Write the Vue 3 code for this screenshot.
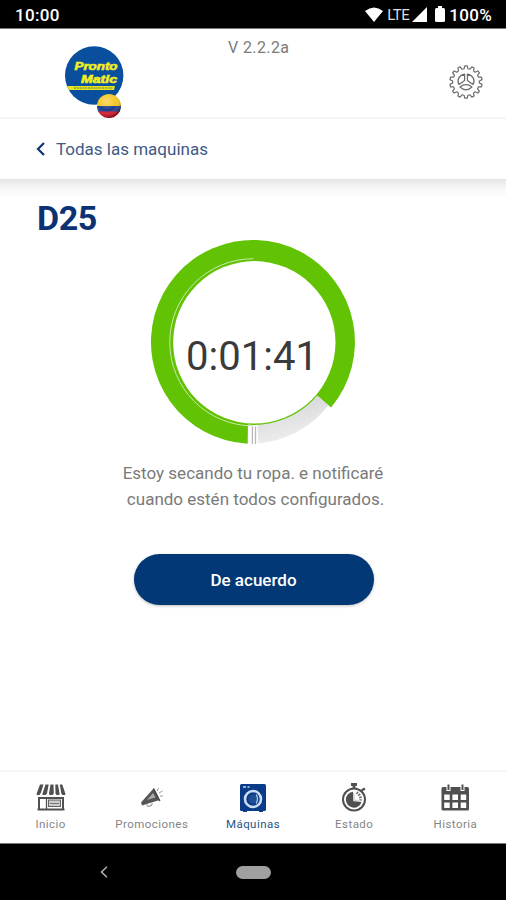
<script setup>
import { ref, computed } from 'vue'

const active = ref('maquinas')
const seconds = ref(101)

const tabs = [
  { id: 'inicio', label: 'Inicio' },
  { id: 'promociones', label: 'Promociones' },
  { id: 'maquinas', label: 'Máquinas' },
  { id: 'estado', label: 'Estado' },
  { id: 'historia', label: 'Historia' }
]

const time = computed(() => {
  const h = Math.floor(seconds.value / 3600)
  const m = Math.floor(seconds.value / 60) % 60
  const s = seconds.value % 60
  return `${h}:${String(m).padStart(2, '0')}:${String(s).padStart(2, '0')}`
})

// settings gear outline
const gear = computed(() => {
  const teeth = 14
  const step = (Math.PI * 2) / teeth
  const points = []
  for (let i = 0; i < teeth; i++) {
    const a = i * step - Math.PI / 2
    for (const [k, r] of [[-0.32, 13.4], [-0.17, 16.2], [0.17, 16.2], [0.32, 13.4]]) {
      points.push(`${(18 + r * Math.cos(a + k * step)).toFixed(2)},${(18 + r * Math.sin(a + k * step)).toFixed(2)}`)
    }
  }
  return points.join(' ')
})
</script>

<template>
  <div class="phone">
    <div class="status">
      <span class="clock">10:00</span>
      <div class="status-right">
        <svg class="wifi" width="18" height="15" viewBox="0 0 18 15">
          <path d="M0 4Q9-3 18 4L9 15Z" fill="#fff" />
        </svg>
        <span class="lte">LTE</span>
        <svg class="signal" width="15" height="15" viewBox="0 0 15 15">
          <path d="M15 0V15H0Z" fill="#fff" />
        </svg>
        <svg class="battery" width="10" height="16" viewBox="0 0 10 16">
          <path d="M3 0H7V2H8.500Q10 2 10 3.500V14.500Q10 16 8.500 16H1.500Q0 16 0 14.500V3.500Q0 2 1.500 2H3Z" fill="#fff" />
        </svg>
        <span class="percent">100%</span>
      </div>
    </div>

    <header class="header">
      <svg class="logo" width="62" height="76" viewBox="0 0 62 76">
        <defs>
          <radialGradient id="shine" cx="0.4" cy="0.3" r="0.7">
            <stop offset="0" stop-color="#fff" stop-opacity="0.35" />
            <stop offset="0.55" stop-color="#fff" stop-opacity="0" />
            <stop offset="1" stop-color="#000" stop-opacity="0.45" />
          </radialGradient>
          <clipPath id="flag"><circle cx="45" cy="61" r="12" /></clipPath>
        </defs>
        <circle cx="30.200" cy="30.500" r="29.200" fill="#0a4f9e" />
        <text x="10.500" y="25.400" class="brand" textLength="43" lengthAdjust="spacingAndGlyphs">Pronto</text>
        <text x="17" y="37.900" class="brand" textLength="36" lengthAdjust="spacingAndGlyphs">Matic</text>
        <path d="M3 41H51L50 45H5Z" fill="#e6e61e" />
        <path d="M10 43H49" stroke="#8f9a3c" stroke-width="1.600" stroke-dasharray="2 0.800" />
        <g clip-path="url(#flag)">
          <rect x="33" y="49" width="24" height="13" fill="#f5c624" />
          <rect x="33" y="61" width="24" height="6" fill="#193c8c" />
          <rect x="33" y="66.500" width="24" height="7" fill="#e0122a" />
          <circle cx="45" cy="61" r="12" fill="url(#shine)" />
        </g>
      </svg>
      <span class="version">V 2.2.2a</span>
      <svg class="gear" width="36" height="36" viewBox="0 0 36 36" fill="none" stroke="#6c6c6c" stroke-width="1.200" stroke-linejoin="round">
        <polygon :points="gear" />
        <path d="M16.600 10.200V16.600L11 20.400C8.400 16.200 11 11.200 16.600 10.200Z" />
        <path d="M19.400 10.200V16.600L25 20.400C27.600 16.200 25 11.200 19.400 10.200Z" />
        <path d="M12 23Q18 18.400 24 23Q18 28.600 12 23Z" />
      </svg>
    </header>

    <div class="back">
      <svg width="10" height="14" viewBox="0 0 10 14">
        <path d="M8 1L2 7L8 13" fill="none" stroke="#0d3474" stroke-width="2.200" />
      </svg>
      <span>Todas las maquinas</span>
    </div>

    <main class="content">
      <h1 class="title">D25</h1>

      <div class="dial">
        <svg width="206" height="206" viewBox="150 238.400 206 206">
          <defs>
            <linearGradient id="rest" x1="0.200" y1="0" x2="0.600" y2="1">
              <stop offset="0" stop-color="#d2d2d4" />
              <stop offset="1" stop-color="#f1f1f2" />
            </linearGradient>
          </defs>
          <path d="M328.500 404.700A98.500 101 0 0 1 258.300 442.700L257.500 423L317 395Z" fill="url(#rest)" />
          <path d="M247.700 443.200A102 102 0 1 1 331.100 406.900L315 393L248 420Z" fill="#62c204" />
          <circle cx="254" cy="341.700" r="82.600" fill="#62c204" />
          <path d="M253.300 425.300A83.600 83.600 0 0 1 253.300 258.100" fill="none" stroke="#c9e8ab" stroke-width="1" />
          <circle cx="254.300" cy="341.700" r="81.200" fill="#fff" />
          <path d="M252.400 426V443.500M255.500 426V443.500" stroke="#bbb7b7" stroke-width="1.300" />
        </svg>
        <span class="time">{{ time }}</span>
      </div>

      <p class="message">Estoy secando tu ropa. e notificaré<br><span>cuando estén todos configurados.</span></p>
      <button class="accept">De acuerdo</button>
    </main>

    <nav class="tabs">
      <div v-for="tab in tabs" :key="tab.id" class="tab" :class="{ active: tab.id === active }" @click="active = tab.id">
        <svg v-if="tab.id === 'inicio'" width="30" height="30" viewBox="0 0 30 30">
          <path d="M4 1.500H7.500L5 9.500L3.500 12H0.700V10.500ZM9.500 1.500H12.700L11 10.500L9.500 12H6.500V10.500ZM14.500 1.500H17.500L17.800 10.500L16.500 12H13.500L13 10.500ZM19.300 1.500H22L23.500 10.500V12H20.500L19.500 10.500ZM23.800 1.500H26.300L29.300 10.500V12H26.300L25.300 10.500Z" fill="#505050" />
          <path d="M3 14V27M27 14V27M2 15H28M1.500 26.500H28.500" stroke="#505050" stroke-width="2" />
          <path d="M10.500 15V26" stroke="#505050" stroke-width="1.300" />
          <rect x="12.500" y="17" width="12" height="6.500" fill="#ccc" stroke="#606060" />
          <path d="M14 20.500H23" stroke="#777" />
        </svg>

        <svg v-else-if="tab.id === 'promociones'" width="30" height="30" viewBox="0 0 30 30">
          <path d="M4 19.500L16.500 5.500L22.500 17L5 22.500Z" fill="#555" />
          <path d="M10 17L16 10L18.500 14.500Z" fill="#a8a8a8" />
          <path d="M16.500 5.500L22.800 18" stroke="#444" stroke-width="1.600" />
          <path d="M9.500 21.500L11 23.500Q14 23.500 15.500 20.500" fill="none" stroke="#999" stroke-width="1.200" />
          <path d="M20 8L21.500 5M22 10L25.500 8M23 13H26" stroke="#999" />
        </svg>

        <svg v-else-if="tab.id === 'maquinas'" width="30" height="30" viewBox="0 0 30 30">
          <rect x="2" y="1" width="26" height="27" rx="1.500" fill="#093b88" />
          <path d="M5 28H9M21 28H25" stroke="#093b88" stroke-width="2" />
          <path d="M5 4H8M9.500 4H11.500" stroke="#c4d5ef" stroke-width="1.500" />
          <circle cx="15" cy="16" r="8" fill="#093b88" stroke="#c9dcf2" stroke-width="2.600" />
          <circle cx="15" cy="16" r="4.600" fill="#1d4d95" />
          <path d="M18.200 11.500Q20.800 16 18.200 20.500" fill="none" stroke="#b3cbea" stroke-width="1.300" />
        </svg>

        <svg v-else-if="tab.id === 'estado'" width="30" height="30" viewBox="0 0 30 30">
          <path d="M12 1.500H18M15 2V6" stroke="#505050" stroke-width="2.800" />
          <path d="M22.500 7.500L26 5.500" stroke="#505050" stroke-width="2.200" />
          <circle cx="15" cy="16.500" r="11" fill="#fff" stroke="#505050" stroke-width="2" />
          <path d="M14 8.700A8 8 0 1 0 22.500 19L15 18Z" fill="#505050" />
          <path d="M15 10V17.500H19.500" fill="none" stroke="#d8d8d8" stroke-width="1.700" />
          <path d="M17.500 9.500A7.500 7.500 0 0 1 21.500 17.500" fill="none" stroke="#777" stroke-width="2.600" stroke-dasharray="1.700 1" />
        </svg>

        <svg v-else width="30" height="30" viewBox="0 0 30 30">
          <rect x="1.500" y="4" width="27.500" height="23.500" rx="1.500" fill="#505050" />
          <path d="M8.500 3V8M22.500 3V8" stroke="#fff" stroke-width="4" />
          <path d="M8.500 1.500V7M22.500 1.500V7" stroke="#505050" stroke-width="2" />
          <path d="M4.200 11.500H9.700V17H4.200ZM12.400 11.500H18V17H12.400ZM20.700 11.500H26.200V17H20.700ZM4.200 19.500H9.700V25H4.200ZM12.400 19.500H18V25H12.400ZM20.700 19.500H26.200V25H20.700Z" fill="#fff" />
        </svg>
        <span class="label">{{ tab.label }}</span>
      </div>
    </nav>

    <div class="system">
      <svg class="sys-back" width="8" height="12" viewBox="0 0 8 12">
        <path d="M7 0.700L1.500 6L7 11.300" fill="none" stroke="#b5b5b5" stroke-width="1.500" />
      </svg>
      <span class="pill"></span>
    </div>
  </div>
</template>

<style>
body {
  margin: 0;
  background: #fff;
}
</style>

<style scoped>
.phone {
  width: 506px;
  height: 900px;
  display: flex;
  flex-direction: column;
  background: #fff;
  font-family: Roboto, sans-serif;
  overflow: hidden;
}

.status {
  height: 29px;
  box-sizing: border-box;
  border-bottom: 1px solid #777;
  padding: 0 14px 0 15px;
  display: flex;
  justify-content: space-between;
  align-items: center;
  background: #000;
  color: #fff;
  flex: none;
}

.clock,
.percent {
  font-size: 17px;
  font-weight: 500;
  line-height: 28px;
  padding-top: 2px;
  letter-spacing: 0.3px;
}

.status-right {
  display: flex;
  align-items: center;
}

.lte {
  font-size: 15px;
  margin-left: 4px;
  padding-top: 2px;
  color: #ddd;
  letter-spacing: -0.5px;
}

.signal {
  margin-left: 3px;
}

.battery {
  margin: 0 4px 0 8px;
}

.header {
  height: 90px;
  box-sizing: border-box;
  border-bottom: 2px solid #f5f5f5;
  padding: 0 21px 0 64px;
  display: grid;
  grid-template-columns: 62px 1fr 37px;
  flex: none;
}

.logo {
  margin-top: 16px;
}

.brand {
  font-family: "Liberation Sans", sans-serif;
  font-size: 10.8px;
  font-weight: 700;
  font-style: italic;
  fill: #f0f020;
  stroke: #f0f020;
  stroke-width: 0.6;
}

.version {
  margin: 9px 0 0 102px;
  font-size: 16px;
  line-height: 20px;
  letter-spacing: 0.4px;
  color: #7b7b7b;
}

.gear {
  margin-top: 35px;
}

.back {
  height: 60px;
  box-sizing: border-box;
  padding: 0 0 0 36px;
  display: flex;
  align-items: center;
  gap: 10px;
  color: #3e5a86;
  font-size: 17px;
  flex: none;
}

.content {
  flex: 1;
  display: flex;
  flex-direction: column;
  align-items: center;
  background: linear-gradient(#e4e4e4, #f4f4f4 7px, #fff 18px);
}

.title {
  align-self: flex-start;
  margin: 19px 0 1px 37px;
  font-size: 34px;
  line-height: 40px;
  font-weight: 700;
  color: #0b3374;
  letter-spacing: -0.4px;
}

.dial {
  width: 206px;
  height: 206px;
  display: grid;
  place-items: center;
}

.dial svg,
.time {
  grid-area: 1 / 1;
}

.time {
  font-size: 40px;
  line-height: 40px;
  padding-top: 30px;
  margin-left: -2px;
  color: #3a3a3a;
}

.message {
  margin: 15px 0 0;
  font-size: 17px;
  line-height: 26px;
  text-align: center;
  color: #7a7a7a;
}

.message span {
  padding-left: 5px;
}

.accept {
  margin: 42px 0 0 1px;
  width: 240px;
  height: 51px;
  border: none;
  border-radius: 26px;
  background: #023876;
  color: #fff;
  font-family: Roboto, sans-serif;
  font-size: 17px;
  font-weight: 500;
  box-shadow: 0 1px 3px rgba(0, 0, 0, 0.25);
}

.tabs {
  height: 73px;
  box-sizing: border-box;
  border-top: 2px solid #f5f5f5;
  display: grid;
  grid-template-columns: repeat(5, 1fr);
  flex: none;
}

.tab {
  display: flex;
  flex-direction: column;
  align-items: center;
  padding-top: 11px;
  color: #858585;
}

.label {
  margin-top: 4px;
  font-size: 11.5px;
  line-height: 15px;
  letter-spacing: 0.45px;
}

.active {
  color: #245487;
}

.system {
  height: 57px;
  box-sizing: border-box;
  border-top: 1px solid #777;
  background: #000;
  display: grid;
  grid-template-columns: 100px 1fr 100px;
  align-items: center;
  flex: none;
}

.sys-back {
  justify-self: end;
  margin-right: -8px;
}

.pill {
  justify-self: center;
  width: 35px;
  height: 13px;
  border-radius: 7px;
  background: #a0a0a0;
}
</style>
